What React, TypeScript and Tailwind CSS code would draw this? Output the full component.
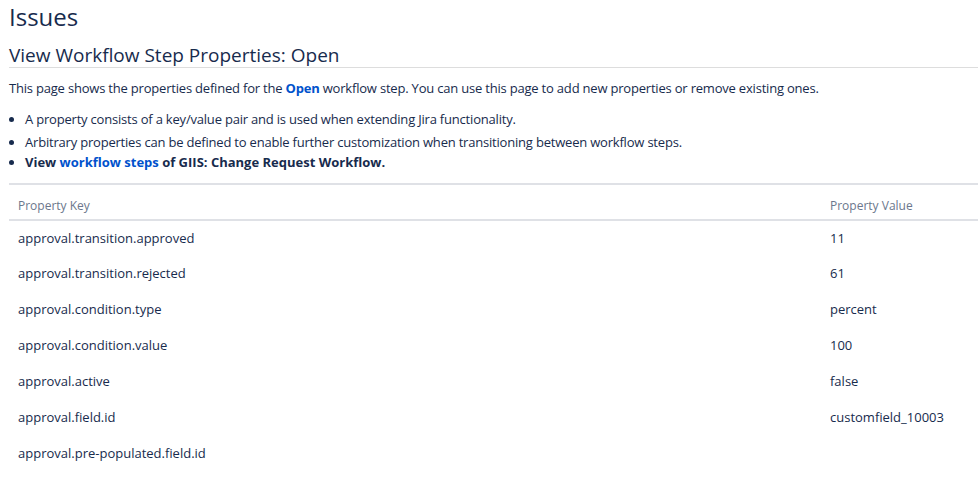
const rows: [string, string][] = [
  ['approval.transition.approved', '11'],
  ['approval.transition.rejected', '61'],
  ['approval.condition.type', 'percent'],
  ['approval.condition.value', '100'],
  ['approval.active', 'false'],
  ['approval.field.id', 'customfield_10003'],
  ['approval.pre-populated.field.id', ''],
];

export default function App() {
  return (
    <div className="min-h-screen bg-white pl-[9px] text-[#172b4d] text-[13px] font-['Open_Sans',sans-serif]">
      <h1 className="pt-[2px] text-[24px] leading-[30px]">Issues</h1>
      <h2 className="mt-[12px] border-b border-[#dddddd] pb-[1px] text-[19px] leading-[22px]">
        View Workflow Step Properties: Open
      </h2>
      <p className="mt-[10px] leading-[20px] tracking-[-0.2px]">
        This page shows the properties defined for the <b className="text-[#0052cc]">Open</b> workflow step. You can use this page to add new properties or remove existing ones.
      </p>
      <ul className="mt-[11px] list-disc pl-[16px] leading-[20px]">
        <li className="mb-[3px] tracking-[-0.2px]">A property consists of a key/value pair and is used when extending Jira functionality.</li>
        <li className="tracking-[-0.2px]">Arbitrary properties can be defined to enable further customization when transitioning between workflow steps.</li>
        <li className="font-bold">
          View <a className="text-[#0052cc]">workflow steps</a> of GIIS: Change Request Workflow.
        </li>
      </ul>
      <div className="mt-[11px] border-t-2 border-[#dfe1e6]">
        <table className="w-full mt-[11px] border-collapse">
          <thead>
            <tr className="border-b-2 border-[#dfe1e6] text-[12px] text-[#6b778c]">
              <th className="pl-[9px] pb-[3px] text-left font-normal leading-[20px]">Property Key</th>
              <th className="w-[148px] pb-[3px] text-left font-normal leading-[20px]">Property Value</th>
            </tr>
          </thead>
          <tbody>
            {rows.map(([k, v]) => (
              <tr key={k} className="h-[36px]">
                <td className="pl-[9px] align-middle">{k}</td>
                <td className="align-middle">{v}</td>
              </tr>
            ))}
          </tbody>
        </table>
      </div>
    </div>
  );
}
